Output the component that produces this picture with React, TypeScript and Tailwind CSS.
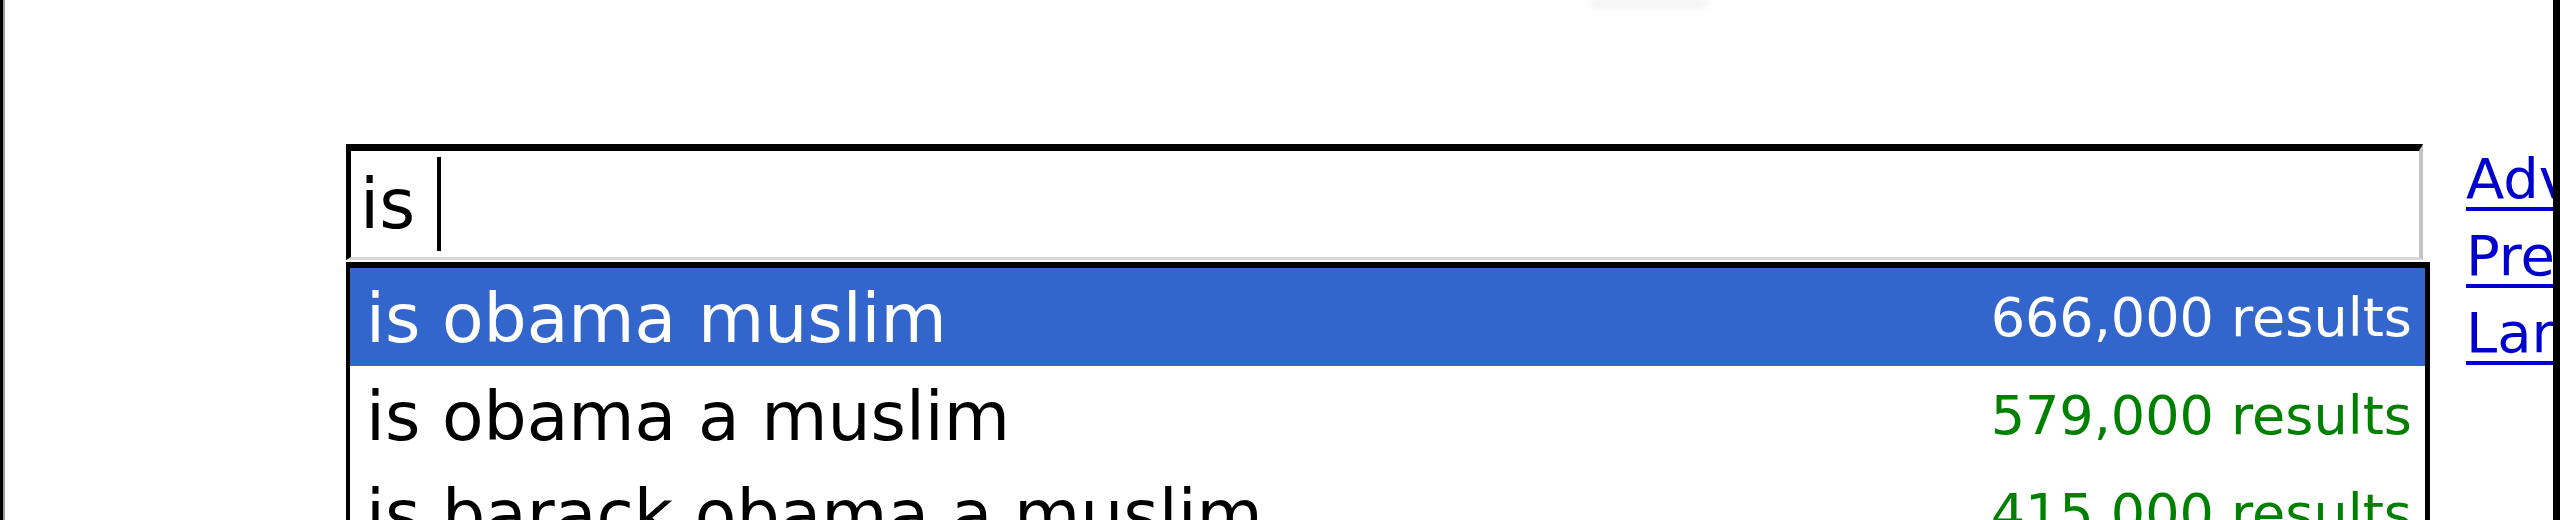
const suggestions = [
  { query: 'is obama muslim', count: '666,000 results' },
  { query: 'is obama a muslim', count: '579,000 results' },
  { query: 'is barack obama a muslim', count: '415,000 results' },
]

const links = ['Advanced Search', 'Preferences', 'Language Tools']

export default function App() {
  return (
    <div className="flex h-[520px] w-[2560px] overflow-hidden bg-white font-['DejaVu_Sans',sans-serif]">
      {/* Window edge */}
      <div className="w-[5px] shrink-0 border-r-[2px] border-[#9a9a9a] bg-black" />

      <main className="flex min-w-0 flex-1 flex-col overflow-hidden">
        {/* Logo bottom sliver */}
        <div className="h-[144px] shrink-0">
          <div className="ml-[1584px] h-[8px] w-[120px] rounded-b-full bg-[#f2f2f2] blur-[3px]" />
        </div>

        <div className="flex items-start">
          {/* Search box + suggest dropdown */}
          <div className="ml-[341px] w-[2084px] shrink-0">
            <div className="flex h-[116px] w-[2077px] items-center border-t-[7px] border-r-[4px] border-b-[3px] border-l-[5px] border-t-black border-r-[#c4c4c4] border-b-[#d8d8d8] border-l-black bg-white pl-[9px]">
              <span className="text-[69px] leading-none text-black">is</span>
              <span className="ml-[22px] h-[94px] w-[4px] bg-black" />
            </div>

            <div className="mt-[2px] border-t-[6px] border-r-[5px] border-b-0 border-l-[4px] border-black bg-white">
              {suggestions.map((s, i) => (
                <div
                  key={s.query}
                  className={
                    i === 0
                      ? 'flex h-[98px] items-center justify-between bg-[#3366cc] pr-[13px] pl-[16px] text-white'
                      : 'flex h-[98px] items-center justify-between bg-white pr-[13px] pl-[16px] text-black'
                  }
                >
                  <span className="pt-[4px] text-[68px] whitespace-nowrap">{s.query}</span>
                  <span
                    className={
                      i === 0
                        ? 'text-[54px] whitespace-nowrap text-white'
                        : 'text-[54px] whitespace-nowrap text-[#008000]'
                    }
                  >
                    {s.count}
                  </span>
                </div>
              ))}
            </div>
          </div>

          {/* Side links */}
          <div className="-mt-[4px] ml-[36px] flex flex-col">
            {links.map((l) => (
              <a
                key={l}
                href="#"
                className="text-[56px] leading-[77px] whitespace-nowrap text-[#0000cc] underline decoration-[4px] underline-offset-[9px]"
              >
                {l}
              </a>
            ))}
          </div>
        </div>
      </main>

      <div className="w-[7px] shrink-0 bg-black" />
    </div>
  )
}
